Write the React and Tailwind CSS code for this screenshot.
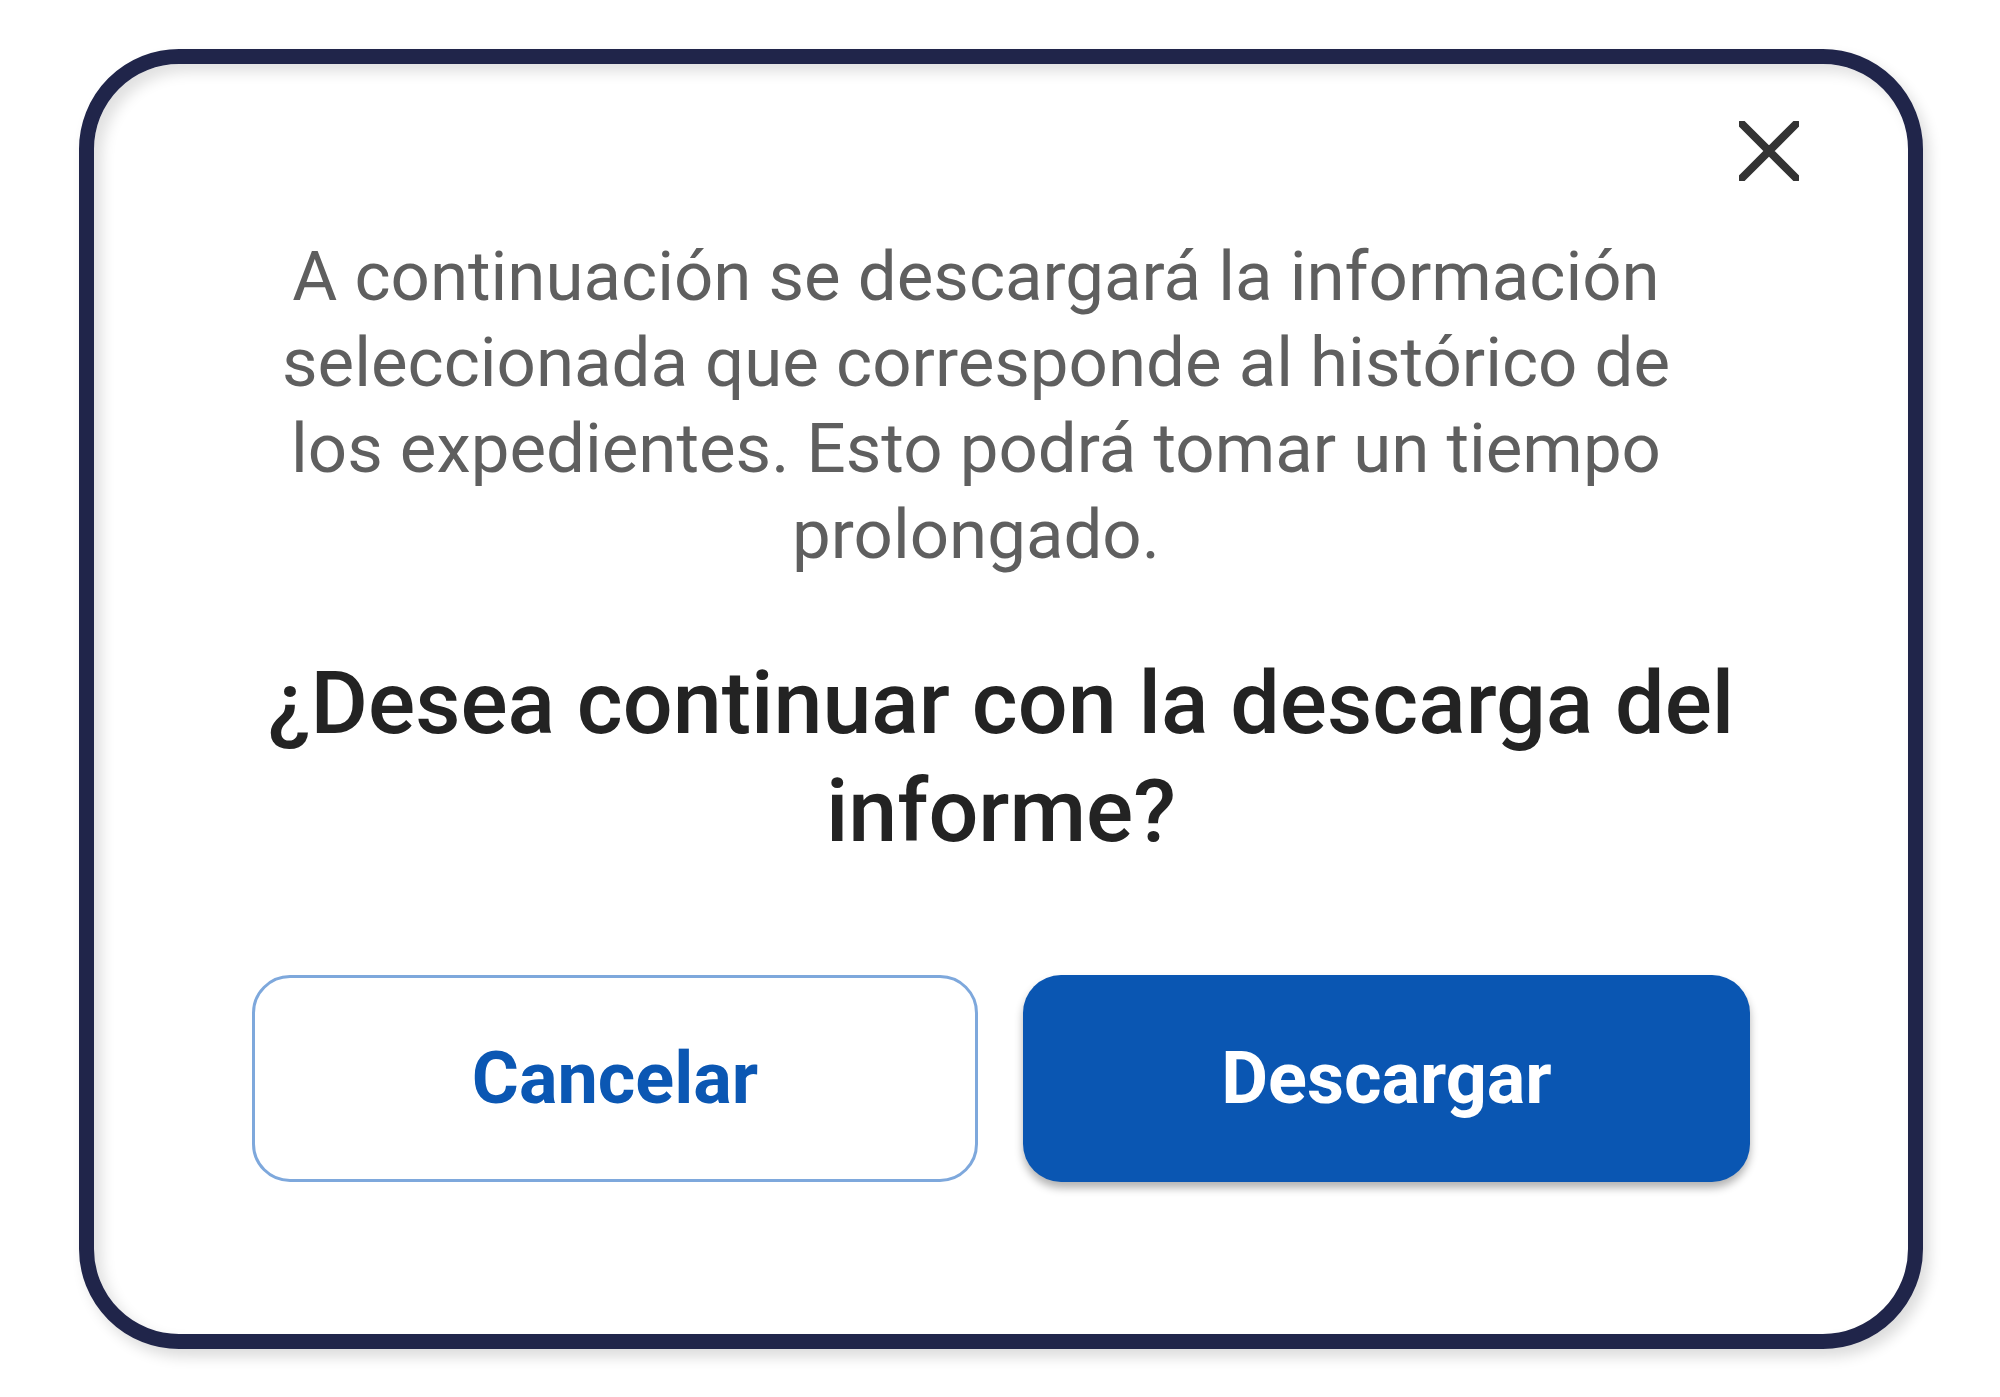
const CloseIcon = () => (
  <svg width="60" height="60" viewBox="0 0 60 60" fill="none">
    <path d="M3 3 L57 57 M57 3 L3 57" stroke="#333333" strokeWidth="8" strokeLinecap="round" />
  </svg>
);

const App = () => {
  return (
    <div className="w-full h-screen bg-white pl-[79px] pt-[49px] font-['Roboto',sans-serif]">
      <div className="w-[1844px] h-[1300px] rounded-[100px] border-[15px] border-[#20254a] bg-white shadow-[6px_8px_14px_rgba(0,0,0,0.14),inset_8px_8px_14px_rgba(0,0,0,0.12)] flex flex-col">
        {/* close */}
        <div className="flex justify-end pt-[57px] pr-[109px]">
          <button className="w-[60px] h-[60px]">
            <CloseIcon />
          </button>
        </div>

        <p className="mt-[53px] ml-[157px] w-[1450px] text-center text-[69px] leading-[86px] text-[#5f5f5f]">
          A continuación se descargará la información seleccionada que corresponde al histórico de los expedientes. Esto podrá tomar un tiempo prolongado.
        </p>

        <h2 className="mt-[71px] mx-auto w-[1600px] text-center text-[88px] leading-[108px] font-medium text-[#232323]">
          ¿Desea continuar con la descarga del informe?
        </h2>

        <div className="mt-[110px] flex justify-center gap-[45px]">
          <button className="w-[726px] h-[207px] rounded-[38px] border-[3px] border-[#7ea8dc] bg-white text-[72px] font-bold text-[#0b57b3]">
            Cancelar
          </button>
          <button className="w-[727px] h-[207px] rounded-[38px] bg-[#0a56b2] text-[72px] font-bold text-white shadow-[0_6px_8px_rgba(0,0,0,0.3)]">
            Descargar
          </button>
        </div>
      </div>
    </div>
  );
};

export default App;
